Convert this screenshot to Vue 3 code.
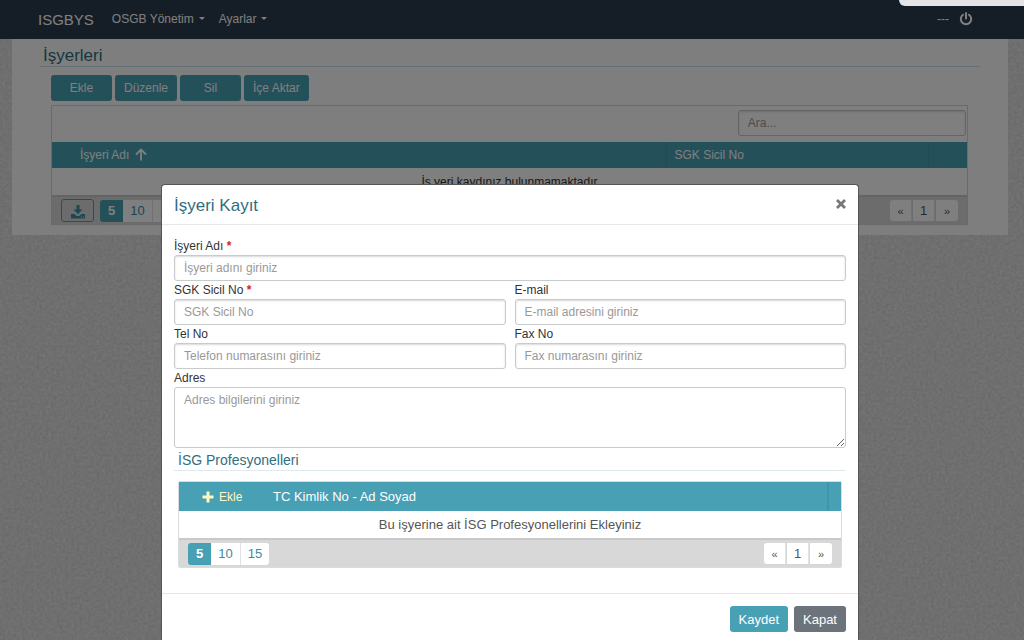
<script setup>
import { ref } from 'vue'

const search = ref('')
const toolbar = ['Ekle', 'Düzenle', 'Sil', 'İçe Aktar']
const menus = ['OSGB Yönetim', 'Ayarlar']
const sizes = [5, 10, 15]
const pager = ['«', '1', '»']
const fields = [
  { id: 'name', label: 'İşyeri Adı', required: true, hint: 'İşyeri adını giriniz', wide: true },
  { id: 'sgk', label: 'SGK Sicil No', required: true, hint: 'SGK Sicil No' },
  { id: 'email', label: 'E-mail', hint: 'E-mail adresini giriniz' },
  { id: 'tel', label: 'Tel No', hint: 'Telefon numarasını giriniz' },
  { id: 'fax', label: 'Fax No', hint: 'Fax numarasını giriniz' }
]
</script>

<template>
  <div class="page">
    <svg class="grain" aria-hidden="true">
      <filter id="grain" x="0" y="0" width="100%" height="100%" color-interpolation-filters="sRGB">
        <feTurbulence type="fractalNoise" baseFrequency="0.35" numOctaves="2" seed="4" />
        <feColorMatrix type="matrix" values="0.14 0 0 0 0.8  0.14 0 0 0 0.8  0.14 0 0 0 0.81  0 0 0 0 1" />
      </filter>
      <rect width="100%" height="100%" filter="url(#grain)" />
    </svg>
    <header class="navbar">
      <a class="brand" href="#">ISGBYS</a>
      <nav class="menu">
        <a v-for="m in menus" :key="m" href="#">{{ m }}<i class="caret"></i></a>
      </nav>
      <div class="account">
        <span>---</span>
        <button class="power" aria-label="Çıkış">
          <svg viewBox="0 0 14 14" width="14" height="14" fill="none" stroke="currentColor" stroke-width="2" stroke-linecap="round">
            <path d="M4 2.8a5.2 5.2 0 1 0 6 0M7 1v5.5" />
          </svg>
        </button>
      </div>
    </header>

    <main class="content">
      <h1>İşyerleri</h1>
      <div class="toolbar">
        <button v-for="t in toolbar" :key="t" class="btn teal">{{ t }}</button>
      </div>
      <section class="grid">
        <div class="search">
          <input v-model="search" class="control" type="text" placeholder="Ara..." aria-label="Ara" />
        </div>
        <table class="main-table">
          <colgroup><col /><col class="c-sgk" /><col class="c-act" /></colgroup>
          <thead>
            <tr>
              <th>İşyeri Adı
                <svg class="sort" viewBox="0 0 12 13" width="12" height="13" fill="none" stroke="currentColor" stroke-width="1.8">
                  <path d="M6 12.5V1.5M1 6.5l5-5 5 5" />
                </svg>
              </th>
              <th>SGK Sicil No</th>
              <th class="act"></th>
            </tr>
          </thead>
          <tbody>
            <tr><td colspan="3">İş yeri kaydınız bulunmamaktadır</td></tr>
          </tbody>
        </table>
        <footer class="grid-foot">
          <button class="download" aria-label="İndir">
            <svg viewBox="0 0 14 14" width="14" height="14" fill="currentColor">
              <path d="M5.5 0h3v4.500h3L7 9 2.500 4.500h3zM0 9h3.500l2 2h3l2-2H14v4.500H0zM10 11.500v1h1v-1zM12 11.500v1h1v-1z" fill-rule="evenodd" />
            </svg>
          </button>
          <div class="pages">
            <button v-for="s in sizes" :key="s" :class="{ active: s === 5 }">{{ s }}</button>
          </div>
          <div class="pages pager">
            <button v-for="p in pager" :key="p" :class="{ arrow: p !== '1' }">{{ p }}</button>
          </div>
        </footer>
      </section>
    </main>
  </div>

  <div class="backdrop">
    <form class="modal" role="dialog" aria-labelledby="modal-title" @submit.prevent>
      <header class="modal-head">
        <h2 id="modal-title">İşyeri Kayıt</h2>
        <button type="button" class="close" aria-label="Pencereyi kapat">
          <svg viewBox="0 0 10 10" width="10" height="10" stroke="currentColor" stroke-width="2.800">
            <path d="M1 1l8 8M9 1L1 9" />
          </svg>
        </button>
      </header>
      <div class="modal-body">
        <div class="fields">
          <div v-for="f in fields" :key="f.id" class="field" :class="{ wide: f.wide }">
            <label :for="f.id">{{ f.label }} <b v-if="f.required">*</b></label>
            <input :id="f.id" class="control" type="text" :placeholder="f.hint" />
          </div>
          <div class="field wide">
            <label for="address">Adres</label>
            <textarea id="address" class="control" placeholder="Adres bilgilerini giriniz"></textarea>
          </div>
        </div>
        <h3>İSG Profesyonelleri</h3>
        <section class="sub-grid">
          <table class="sub-table">
            <colgroup><col class="c-add" /><col /><col class="c-end" /></colgroup>
            <thead>
              <tr>
                <th>
                  <button type="button" class="add">
                    <svg viewBox="0 0 12 12" width="12" height="12" fill="currentColor">
                      <path d="M4.500 0.500h3v4h4v3h-4v4h-3v-4h-4v-3h4z" />
                    </svg>
                    Ekle
                  </button>
                </th>
                <th>TC Kimlik No - Ad Soyad</th>
                <th class="end"></th>
              </tr>
            </thead>
            <tbody>
              <tr><td colspan="3">Bu işyerine ait İSG Profesyonellerini Ekleyiniz</td></tr>
            </tbody>
          </table>
          <footer class="grid-foot">
            <div class="pages">
              <button v-for="s in sizes" :key="s" type="button" :class="{ active: s === 5 }">{{ s }}</button>
            </div>
            <div class="pages pager">
              <button v-for="p in pager" :key="p" type="button" :class="{ arrow: p !== '1' }">{{ p }}</button>
            </div>
          </footer>
        </section>
      </div>
      <footer class="modal-foot">
        <button type="submit" class="btn teal">Kaydet</button>
        <button type="button" class="btn gray">Kapat</button>
      </footer>
    </form>
  </div>
  <div class="notice" aria-hidden="true"></div>
</template>

<style>
html, body { height: 100%; overflow: hidden; }
body { margin: 0; font-family: "Liberation Sans", Arial, sans-serif; font-size: 12px; color: #333; }
</style>

<style scoped>
* { box-sizing: border-box; }
button, input, textarea { font: inherit; }
button { cursor: pointer; }
h1, h2, h3 { margin: 0; font-weight: 400; color: #2f6f7f; }
.page { position: relative; min-height: 100vh; background: #dcdcde; }
.grain { position: absolute; inset: 0; width: 100%; height: 100%; }
.navbar {
  position: relative; display: flex; align-items: center; height: 39px;
  padding: 0 51px 1px 38px; background: #2b3c4c; color: #fff;
}
.navbar a { color: inherit; text-decoration: none; }
.navbar .brand { font-size: 15px; margin-right: 18px; }
.menu { display: flex; gap: 14px; }
.caret {
  display: inline-block; margin-left: 5px; vertical-align: 3px;
  border: 3px solid transparent; border-top-color: currentColor; border-bottom: 0;
}
.account { display: flex; align-items: center; gap: 10px; margin-left: auto; }
.power { display: flex; padding: 0; border: 0; background: none; color: #fff; }
.content {
  position: relative; margin: 0 16px 0 12px; padding: 5px 28px 10px; background: #fdfdff;
}
.content h1 {
  height: 23px; padding-left: 3px; border-bottom: 1px solid #c6dfe5;
  font-size: 17px; line-height: 24px;
}
.toolbar { display: flex; gap: 3px; padding: 8px 11px 4px; }
.btn {
  min-width: 61px; height: 26px; padding: 0 9px; border: 0; border-radius: 3px;
  color: #fff; white-space: nowrap;
}
.teal { background: #48a0b5; }
.gray { background: #6c737b; }
.grid { margin: 0 12px 0 11px; border: 1px solid #d5d5d5; }
.search { display: flex; justify-content: flex-end; padding: 4px 1px 6px; }
.search .control { width: 25%; }
.control {
  display: block; width: 100%; height: 26px; padding: 0 9px; border: 1px solid #c8cbcb;
  border-radius: 3px; outline: 0; background: #fff; color: #333;
  box-shadow: inset 0 1px 2px rgba(0, 0, 0, 0.15);
}
.control::placeholder { color: #999; opacity: 1; }
table { width: 100%; table-layout: fixed; border-collapse: collapse; }
th { padding: 0; background: #48a0b5; color: #fff; text-align: left; font-weight: 400; }
td { padding: 0; background: #fff; text-align: center; }
.c-sgk { width: 262px; }
.c-act { width: 39px; }
.main-table th { height: 26px; padding-left: 8px; border-right: 1px solid #4297ab; }
.main-table th:first-child { padding-left: 28px; }
.main-table th:last-child { border-right: 0; }
.main-table td { height: 27px; }
.sort { margin-left: 2px; vertical-align: -2px; }
.grid-foot {
  display: flex; align-items: center; height: 29px; padding: 0 9px;
  border-top: 2px solid #c9c9c9; background: #d8d8d8;
}
.download {
  display: flex; align-items: center; justify-content: center; width: 33px; height: 23px;
  margin-right: 6px; padding: 3px 0 0; border: 1px solid #48a0b5; border-radius: 3px;
  background: none; color: #3b8ea3;
}
.pages { display: flex; font-size: 13px; }
.pages button {
  height: 22px; padding: 0 7px; border: 0; border-right: 1px solid #dfe3e6;
  background: #fff; color: #3a8ba0;
}
.pages button:first-child { border-radius: 3px 0 0 3px; }
.pages button:last-child { border-right: 0; border-radius: 0 3px 3px 0; }
.pages .active { padding: 0 8px; border-right: 0; background: #48a0b5; color: #fff; font-weight: 700; }
.pager { gap: 1px; margin-left: auto; }
.pages.pager button { width: 22px; height: 21px; padding: 0; color: #555; }
.pager .arrow { font-size: 11px; }

.backdrop {
  position: fixed; inset: 0; padding: 184px 165px 0 161px; background: rgba(0, 0, 0, 0.5);
}
.modal {
  border: 1px solid #555; border-bottom: 0; border-radius: 4px 4px 0 0; background: #fff;
}
.modal-head {
  display: flex; align-items: center; justify-content: space-between; height: 40px;
  padding: 2px 11px 0 12px; border-bottom: 1px solid #e5e9ea;
}
.modal-head h2 { font-size: 17px; }
.close { display: flex; padding: 0 1px 4px; border: 0; background: none; color: #777; }
.modal-body { padding: 12px 12px 25px; }
.fields { display: grid; grid-template-columns: 1fr 1fr; column-gap: 9px; }
.wide { grid-column: 1 / -1; }
.field label { display: block; height: 18px; line-height: 18px; }
.field b { color: #e02020; }
textarea.control { height: 61px; padding: 5px 9px; box-shadow: none; resize: vertical; }
.modal h3 {
  height: 23px; margin-bottom: 10px; padding-left: 4px; border-bottom: 1px solid #dfe9ee;
  font-size: 14px; line-height: 25px;
}
.sub-grid { margin: 0 4px; border: 1px solid #d8dcde; border-radius: 2px; font-size: 13px; }
.sub-table th { height: 29px; }
.sub-table td { height: 27px; color: #555; }
.c-add { width: 94px; }
.c-end { width: 13px; }
.sub-table .end { border-left: 2px solid #4095aa; }
.add {
  display: flex; align-items: center; gap: 5px; padding: 0 0 0 23px; border: 0;
  background: none; color: #fff8c0; font-size: 12px;
}
.modal-foot {
  display: flex; justify-content: flex-end; gap: 6px; padding: 12px 12px 8px;
  border-top: 1px solid #e2e8ec; font-size: 13px;
}
.modal-foot .btn { min-width: 52px; }
.notice {
  position: fixed; top: 0; right: 0; width: 125px; height: 6px;
  border-bottom-left-radius: 6px; background: #e4e4e6;
}
</style>
